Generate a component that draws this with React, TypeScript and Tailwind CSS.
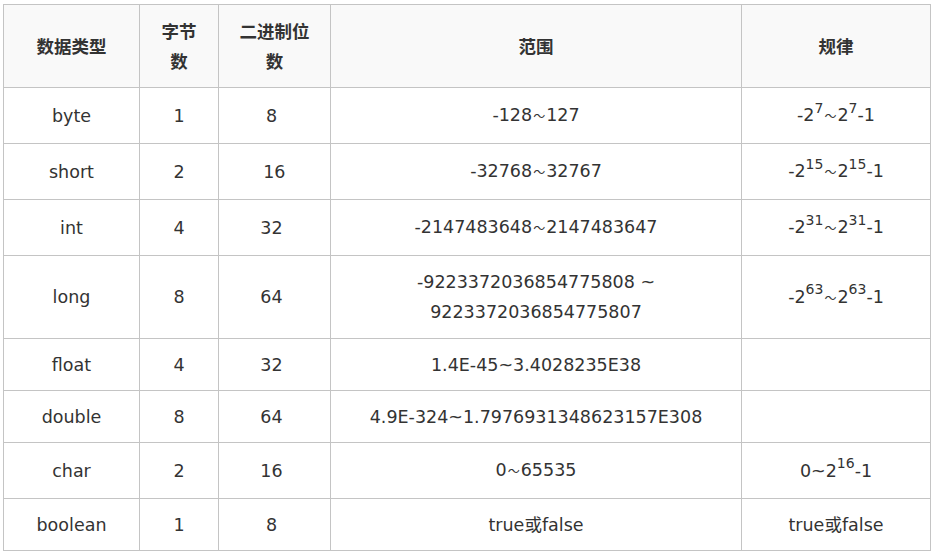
const font = { fontFamily: '"DejaVu Sans", Verdana, "Noto Sans CJK SC", sans-serif' };

type Row = { type: string; bytes: string; bits: string; range: React.ReactNode; rule: React.ReactNode; h: string };

function Pow({ pre = "", exp, post = "" }: { pre?: string; exp: string; post?: string }) {
  return (
    <>
      {pre}2<sup className="text-[14px] top-[-0.6em]">{exp}</sup>
      {post}
    </>
  );
}

function Tilde() {
  return <span className="font-['Noto_Sans_CJK_SC'] text-[12px] px-px">～</span>;
}

function Rule({ exp }: { exp: string }) {
  return (
    <>
      <Pow pre="-" exp={exp} />
      <Tilde />
      <Pow exp={exp} post="-1" />
    </>
  );
}

const rows: Row[] = [
  { type: "byte", bytes: "1", bits: "8", range: <>-128<Tilde />127</>, rule: <Rule exp="7" />, h: "h-[56px]" },
  { type: "short", bytes: "2", bits: "\u00a016", range: <>-32768<Tilde />32767</>, rule: <Rule exp="15" />, h: "h-[56px]" },
  { type: "int", bytes: "4", bits: "32", range: <>-2147483648<Tilde />2147483647</>, rule: <Rule exp="31" />, h: "h-[56px]" },
  {
    type: "long",
    bytes: "8",
    bits: "64",
    range: (
      <>
        -9223372036854775808 ~<br />
        9223372036854775807
      </>
    ),
    rule: <Rule exp="63" />,
    h: "h-[83px]",
  },
  { type: "float", bytes: "4", bits: "32", range: "1.4E-45~3.4028235E38", rule: "", h: "h-[52px]" },
  { type: "double", bytes: "8", bits: "64", range: "4.9E-324~1.7976931348623157E308", rule: "", h: "h-[52px]" },
  { type: "char", bytes: "2", bits: "16", range: <>0<Tilde />65535</>, rule: <>0~<Pow exp="16" post="-1" /></>, h: "h-[56px]" },
  { type: "boolean", bytes: "1", bits: "8", range: "true或false", rule: "true或false", h: "h-[52px]" },
];

const cell = "border border-[#c4c4c4] px-3 text-center align-middle";

export default function App() {
  return (
    <div className="w-[933px] h-[554px] bg-white pl-[3px] pt-[4px]" style={font}>
      <table className="table-fixed border-collapse w-[927px] text-[17.5px] leading-[30px] text-[#333]">
        <colgroup>
          <col className="w-[136px]" />
          <col className="w-[79px]" />
          <col className="w-[112px]" />
          <col className="w-[411px]" />
          <col className="w-[189px]" />
        </colgroup>
        <thead>
          <tr className="h-[83px] bg-[#f9f9f9] font-['Noto_Sans_CJK_SC'] font-bold">
            <th className={cell}>数据类型</th>
            <th className={cell}>
              字节
              <br />数
            </th>
            <th className={cell}>
              二进制位
              <br />数
            </th>
            <th className={cell}>范围</th>
            <th className={cell}>规律</th>
          </tr>
        </thead>
        <tbody>
          {rows.map((r) => (
            <tr key={r.type} className={r.h}>
              <td className={cell}>{r.type}</td>
              <td className={cell}>{r.bytes}</td>
              <td className={cell + " pr-[18px]"}>{r.bits}</td>
              <td className={cell}>{r.range}</td>
              <td className={cell}>{r.rule}</td>
            </tr>
          ))}
        </tbody>
      </table>
    </div>
  );
}
